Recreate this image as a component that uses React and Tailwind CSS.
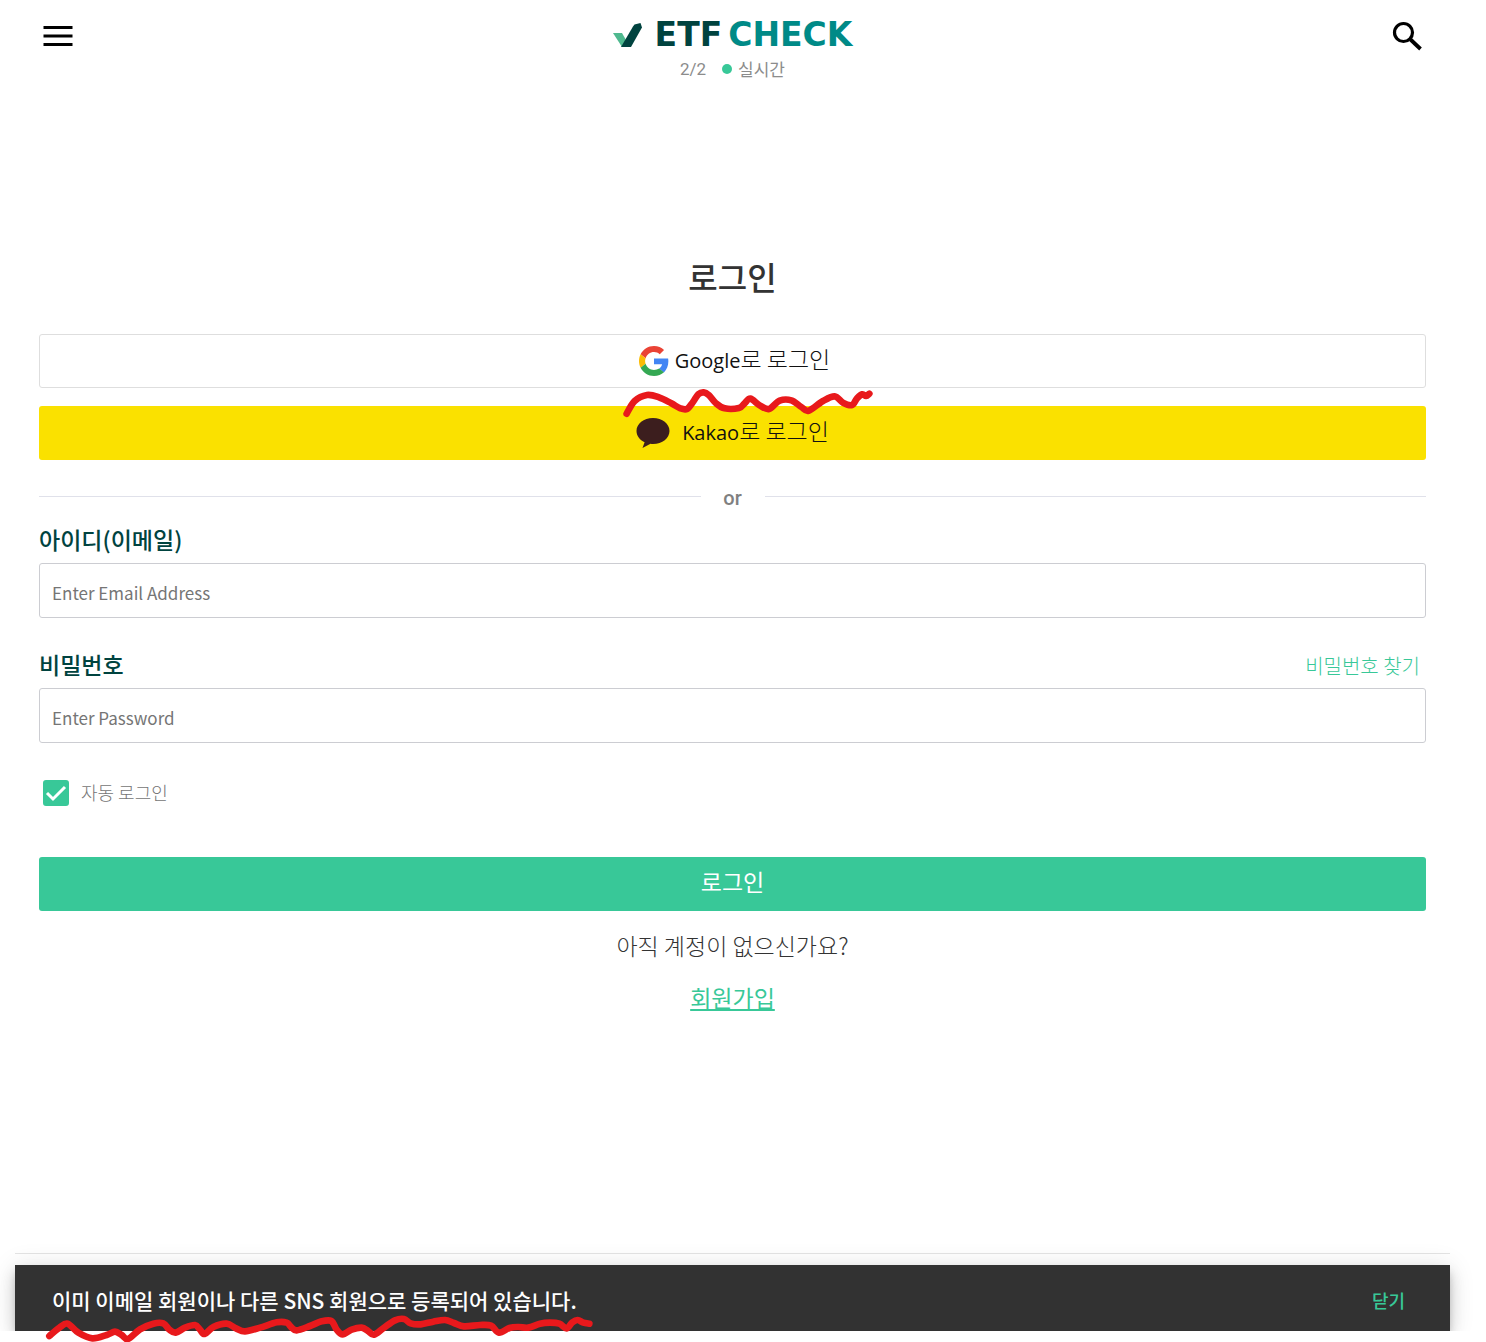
import React from "react";

function smoothPath(points) {
  let d = `M${points[0][0]} ${points[0][1]}`;
  for (let i = 0; i < points.length - 1; i++) {
    const p0 = points[i - 1] || points[i];
    const p1 = points[i];
    const p2 = points[i + 1];
    const p3 = points[i + 2] || p2;
    d += `C${p1[0] + (p2[0] - p0[0]) / 6} ${p1[1] + (p2[1] - p0[1]) / 6} ${p2[0] - (p3[0] - p1[0]) / 6} ${p2[1] - (p3[1] - p1[1]) / 6} ${p2[0]} ${p2[1]}`;
  }
  return d;
}

const googleMark = [
  [51, 250], [75, 212], [112, 194], [148, 201], [185, 219], [212, 234], [232, 236], [250, 215],
  [266, 192], [282, 186], [298, 195], [318, 218], [345, 234], [388, 233], [404, 220], [422, 205],
  [450, 225], [478, 236], [510, 211], [545, 210], [575, 230], [597, 241], [640, 212], [675, 198],
  [700, 217], [727, 224], [742, 204], [758, 192], [769, 197], [779, 190],
];

const messageMark = [
  [148, 287], [178, 262], [203, 250], [235, 277], [277, 294], [320, 284], [345, 274], [365, 284],
  [384, 296], [420, 267], [460, 250], [490, 249], [508, 268], [527, 277], [555, 262], [585, 254],
  [600, 268], [614, 281], [640, 260], [680, 250], [708, 264], [735, 273], [780, 262], [830, 246],
  [860, 247], [873, 260], [890, 270], [930, 257], [965, 243], [994, 242], [1010, 268], [1028, 282],
  [1055, 268], [1085, 262], [1104, 272], [1122, 283], [1152, 262], [1185, 240], [1212, 236],
  [1232, 249], [1262, 252], [1300, 244], [1335, 239], [1362, 248], [1392, 258], [1440, 254],
  [1473, 256], [1497, 277], [1528, 263], [1555, 260], [1585, 262], [1620, 250], [1650, 247],
  [1678, 250], [1700, 264], [1717, 246], [1733, 239], [1750, 247], [1768, 250],
];

function Squiggle({ points, viewBox, className }) {
  return (
    <svg viewBox={viewBox} className={className} fill="none" aria-hidden="true">
      <path d={smoothPath(points)} stroke="#e8191c" strokeWidth="20" strokeLinecap="round" strokeLinejoin="round" />
    </svg>
  );
}

function Logo() {
  return (
    <a href="#home" className="flex h-8 items-center" aria-label="ETF CHECK">
      <svg viewBox="0 0 30 26" className="mr-3 h-[26px] w-[30px]" aria-hidden="true">
        <path d="M0 11h9l4 7-4 7z" fill="#4fb98f" />
        <path d="M8 25 20 4.500 21.500 2.500 27.500 1 29 5.500 18 25z" fill="#00433f" />
      </svg>
      <span className="mr-1.5 font-['DejaVu_Sans'] text-[33px] leading-8 font-bold text-[#00433f]">ETF</span>
      <span className="font-['DejaVu_Sans'] text-[33px] leading-8 font-bold text-[#008a87]">CHECK</span>
    </a>
  );
}

function GoogleIcon() {
  return (
    <svg viewBox="0 0 48 48" className="h-[30px] w-[30px]" aria-hidden="true">
      <path fill="#EA4335" d="M24 9.500c3.540 0 6.710 1.220 9.210 3.600l6.850-6.850C35.900 2.380 30.470 0 24 0 14.620 0 6.510 5.380 2.560 13.220l7.980 6.190C12.430 13.720 17.740 9.500 24 9.500z" />
      <path fill="#4285F4" d="M46.980 24.550c0-1.570-.15-3.090-.38-4.550H24v9.020h12.940c-.58 2.960-2.260 5.480-4.780 7.180l7.730 6c4.510-4.180 7.090-10.360 7.090-17.650z" />
      <path fill="#FBBC05" d="M10.530 28.590c-.48-1.450-.76-2.990-.76-4.590s.27-3.140.76-4.590l-7.980-6.190C.92 16.460 0 20.120 0 24c0 3.880.92 7.540 2.560 10.780l7.970-6.190z" />
      <path fill="#34A853" d="M24 48c6.480 0 11.930-2.130 15.890-5.810l-7.730-6c-2.150 1.450-4.920 2.300-8.160 2.300-6.260 0-11.570-4.220-13.470-9.910l-7.980 6.190C6.510 42.620 14.620 48 24 48z" />
    </svg>
  );
}

function KakaoIcon() {
  return (
    <svg viewBox="0 0 34 30" className="h-[30px] w-[34px]" fill="#3c1e1e" aria-hidden="true">
      <path d="M17 0C7.600 0 .5 5.800.5 13c0 4.800 3.200 9 8.100 11.300L6.500 30l8-4.300c.8.200 1.700.2 2.500.2 9.400 0 16.500-5.700 16.500-12.900S26.400 0 17 0z" />
    </svg>
  );
}

const field =
  "block h-[55px] w-full rounded-[3px] border border-[#cccdd2] px-3 pt-1 text-[17px] text-[#333] placeholder:text-[#757575] outline-none";

export default function App() {
  return (
    <div className="overflow-x-hidden bg-white font-['Noto_Sans_CJK_KR',sans-serif] text-[#333]">
      <div className="mr-9 ml-[15px]">
        <header className="flex items-start justify-between px-6 pt-[18px]">
          <button type="button" aria-label="메뉴" className="flex h-9 w-9 items-center justify-center">
            <svg viewBox="0 0 36 36" className="h-9 w-9" aria-hidden="true">
              <path d="M4.500 9.500h29M4.500 18h29M4.500 26.500h29" stroke="#000" strokeWidth="3" />
            </svg>
          </button>
          <div className="flex flex-col items-center pt-px">
            <Logo />
            <div className="mt-1 flex items-center text-[17px] leading-7 text-[#8c8c8c]">
              <span className="mr-4 font-[Roboto]">2/2</span>
              <span className="mr-1.5 h-2.5 w-2.5 rounded-full bg-[#38c898]" />
              <span>실시간</span>
            </div>
          </div>
          <button type="button" aria-label="검색" className="flex h-9 w-9 items-center justify-center">
            <svg viewBox="0 0 36 36" className="h-9 w-9" fill="none" stroke="#000" aria-hidden="true">
              <circle cx="13.500" cy="14.500" r="9" strokeWidth="3.200" />
              <path d="m20.500 21.500 10 9.500" strokeWidth="3.800" />
            </svg>
          </button>
        </header>

        <main className="px-6 pt-[169px]">
          <h1 className="text-center text-[32px] leading-12 font-medium">로그인</h1>

          <button
            type="button"
            className="relative mt-[34px] flex h-[54px] w-full items-center justify-center gap-1.5 rounded-[3px] border border-[#dedede] pl-1 text-[23px] text-[#111]"
          >
            <GoogleIcon />
            <span className="pb-1.5 font-light">
              <span className="font-['Open_Sans'] text-[20px] font-medium">Google</span>로 로그인
            </span>
            <Squiggle points={googleMark} viewBox="40 170 750 96" className="absolute top-[52px] left-1/2 z-10 -ml-[110px] h-8 w-[250px]" />
          </button>

          <button
            type="button"
            className="mt-[18px] flex h-[54px] w-full items-center justify-center gap-3 rounded-[3px] bg-[#fae100] text-[23px] text-[#111]"
          >
            <KakaoIcon />
            <span className="pb-1.5 font-light">
              <span className="font-['Open_Sans'] text-[20px] font-medium">Kakao</span>로 로그인
            </span>
          </button>

          <div className="mt-5 flex h-8 items-center">
            <span className="h-px flex-1 bg-[#e0e1ea]" />
            <span className="w-16 pt-1 text-center font-[Roboto] text-[20px] leading-7 font-medium text-[#808080]">or</span>
            <span className="h-px flex-1 bg-[#e0e1ea]" />
          </div>

          <form onSubmit={(e) => e.preventDefault()}>
            <label htmlFor="email" className="mt-[11px] mb-2 block text-[23px] leading-8 font-medium text-[#00433f]">
              아이디(이메일)
            </label>
            <input id="email" type="email" placeholder="Enter Email Address" className={field} />

            <div className="mt-[30px] mb-2 flex items-center justify-between pr-1.5">
              <label htmlFor="password" className="text-[23px] leading-8 font-medium text-[#00433f]">
                비밀번호
              </label>
              <a href="#find" className="pt-1 text-[20px] leading-7 font-light text-[#38c898]">비밀번호 찾기</a>
            </div>
            <input id="password" type="password" placeholder="Enter Password" className={field} />

            <div className="mt-[34px] flex h-8 items-center pl-1">
              <span className="relative h-[26px] w-[26px]">
                <input
                  id="auto"
                  type="checkbox"
                  defaultChecked
                  className="peer block h-[26px] w-[26px] appearance-none rounded-[3px] border-2 border-[#38c898] checked:bg-[#38c898]"
                />
                <svg viewBox="0 0 26 26" fill="none" className="pointer-events-none absolute inset-0 hidden h-[26px] w-[26px] peer-checked:block" aria-hidden="true">
                  <path d="m4 13 6 6L22 7" stroke="#fff" strokeWidth="3" />
                </svg>
              </span>
              <label htmlFor="auto" className="ml-3 pb-0.5 text-[18px] leading-7 font-light text-[#757575]">자동 로그인</label>
            </div>

            <button type="submit" className="mt-12 flex h-[54px] w-full items-center justify-center rounded-[3px] bg-[#38c898] pb-1.5 text-[23px] text-white">
              로그인
            </button>
          </form>

          <p className="mt-[18px] text-center text-[23px] leading-8 font-light">아직 계정이 없으신가요?</p>
          <p className="mt-5 text-center text-[23px] leading-8">
            <a href="#join" className="text-[#38c898] underline decoration-2 underline-offset-2">회원가입</a>
          </p>
        </main>

        <footer className="mt-60 border-t border-[#e4e4e4] pt-[11px]">
          <div
            role="alert"
            className="relative flex h-[66px] items-center justify-between bg-[#323232] pt-1 pr-[45px] pl-[37px] shadow-[0_5px_8px_-2px_rgba(0,0,0,0.2),0_9px_15px_rgba(0,0,0,0.14),0_2px_27px_rgba(0,0,0,0.12)]"
          >
            <span className="text-[21px] leading-8 font-medium text-white">이미 이메일 회원이나 다른 SNS 회원으로 등록되어 있습니다.</span>
            <button type="button" className="text-[18px] leading-8 font-medium text-[#38c898]">닫기</button>
            <Squiggle points={messageMark} viewBox="135 218 1650 90" className="absolute top-12 left-[30px] z-20 h-[30px] w-[550px]" />
          </div>
        </footer>
      </div>
      <div className="relative z-10 h-[11px] bg-white" />
    </div>
  );
}
